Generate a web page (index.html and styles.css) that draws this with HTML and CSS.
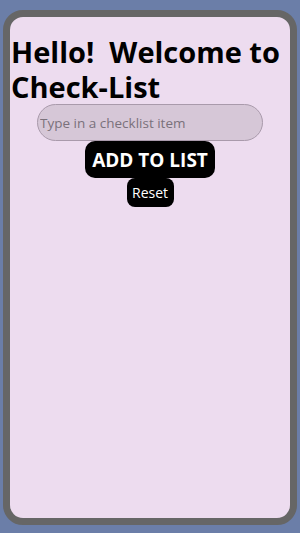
FILE: index.html
```html
<!DOCTYPE html>
<html lang="en">
<head>
<meta charset="utf-8">
<title>Check-List</title>
<link rel="stylesheet" href="styles.css">
</head>
<body>
<main class="phone">
  <h1 class="title">Hello!&nbsp; Welcome to Check-List</h1>
  <form class="entry" onsubmit="return false">
    <input class="item-input" type="text" placeholder="Type in a checklist item">
    <button class="btn btn-add" type="button">ADD TO LIST</button>
    <button class="btn btn-reset" type="button">Reset</button>
  </form>
  <ul class="list"></ul>
</main>
</body>
</html>
```

FILE: styles.css
```css
html {
  background: #6b7ea8;
}
body {
  margin: 0;
  padding: 10px 3px 8px 3px;
  font-family: "Open Sans", "Noto Sans", sans-serif;
}
.phone {
  box-sizing: border-box;
  width: 294px;
  height: 515px;
  border: 7px solid #666666;
  border-radius: 20px;
  background: #eddcef;
  padding: 0 1px;
}
.title {
  margin: 17px 0 0 0;
  font-size: 29px;
  line-height: 35px;
  font-weight: 700;
  color: #000;
}
.entry {
  display: flex;
  flex-direction: column;
  align-items: center;
  margin: 0;
}
.item-input {
  box-sizing: border-box;
  width: 226px;
  height: 37px;
  border: 1px solid #a99aab;
  border-radius: 19px;
  background: #d6c7d7;
  padding: 0 2px;
  font-family: "Open Sans", sans-serif;
  font-size: 13.5px;
  color: #333;
  outline: none;
}
.item-input::placeholder {
  color: #7a717b;
}
.btn {
  box-sizing: border-box;
  border: none;
  background: #000;
  color: #fff;
  font-family: "Open Sans", sans-serif;
  cursor: pointer;
}
.btn-add {
  width: 130px;
  height: 37px;
  border-radius: 10px;
  font-size: 19px;
  font-weight: 700;
  padding: 0;
}
.btn-reset {
  width: 47px;
  height: 29px;
  border-radius: 8px;
  font-size: 14px;
  padding: 0;
}
.list {
  margin: 0;
  padding: 0;
  list-style: none;
}
```
